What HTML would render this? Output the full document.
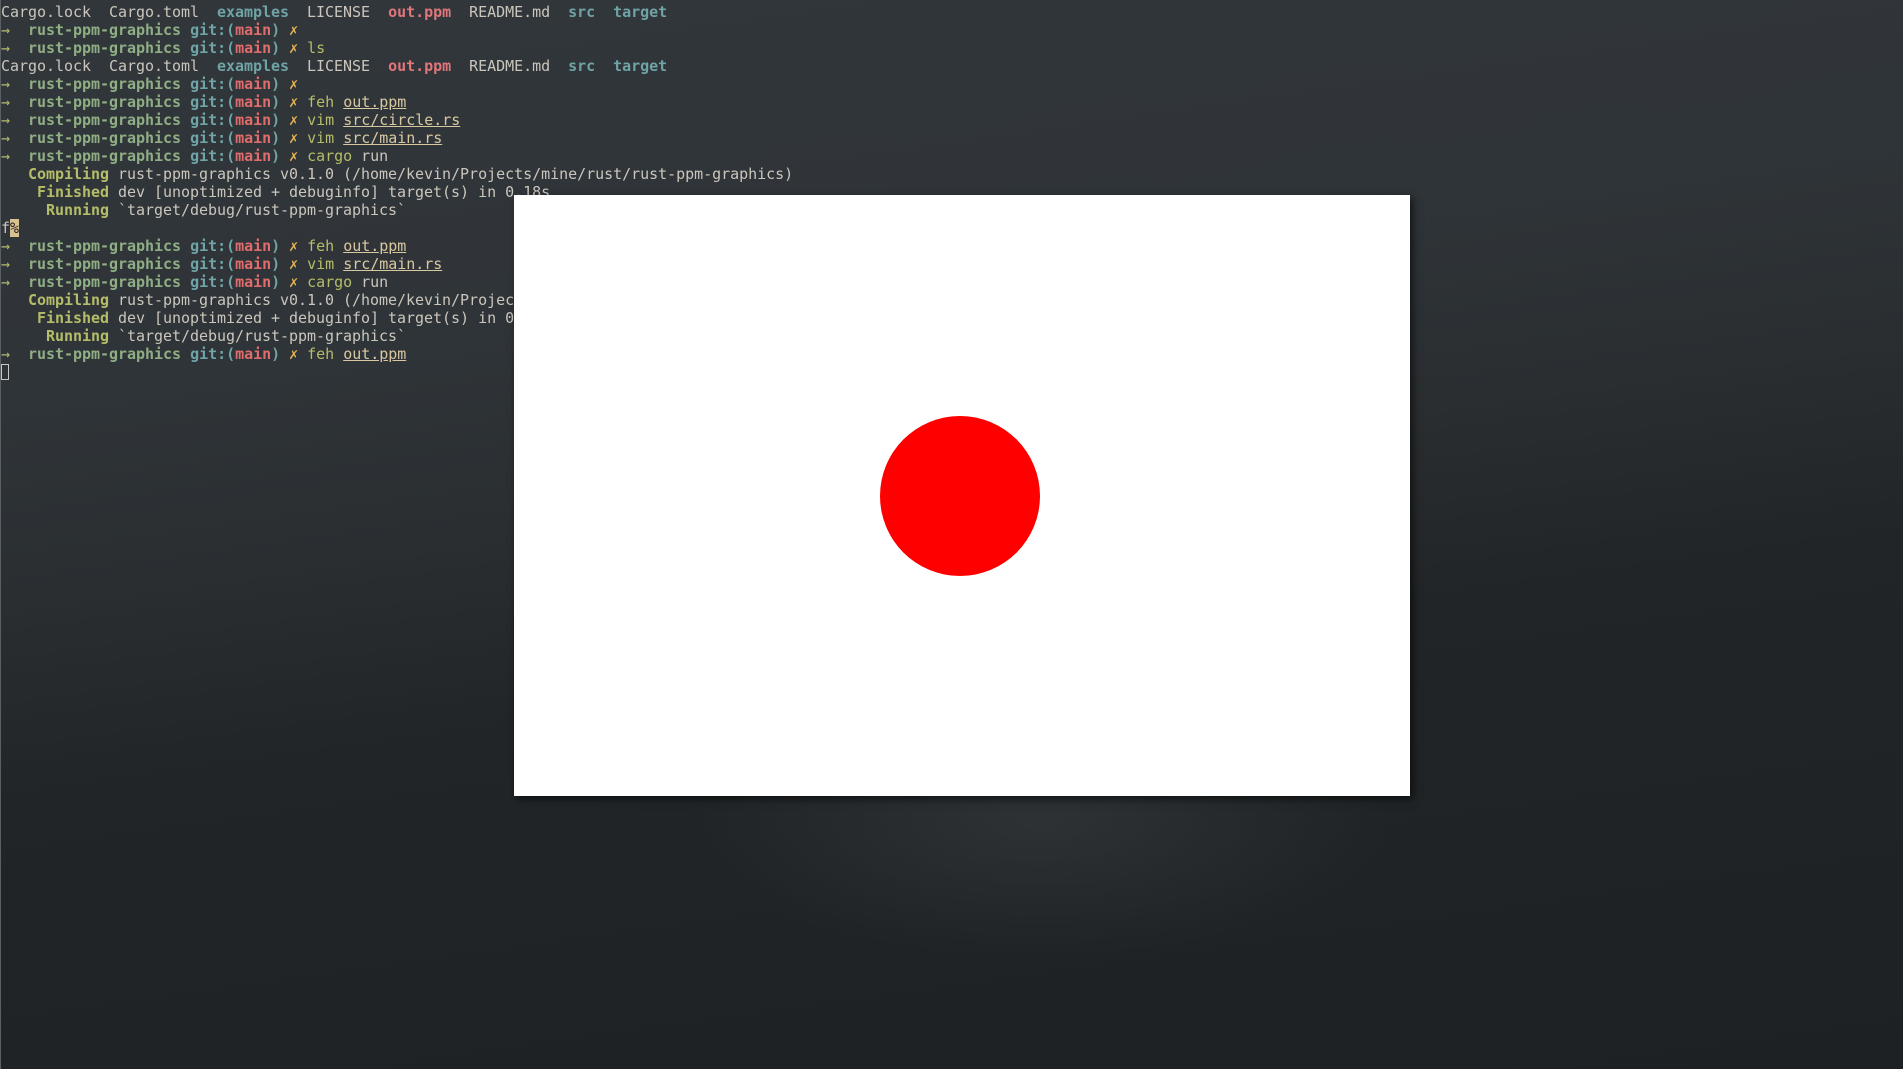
<!DOCTYPE html>
<html><head><meta charset="utf-8"><style>
html,body{margin:0;padding:0}
body{width:1903px;height:1069px;overflow:hidden;position:relative;
background:
radial-gradient(ellipse 500px 200px at 1040px 820px, rgba(70,75,80,0.35), transparent 70%),
linear-gradient(172deg, #31363b 0%, #2f3438 30%, #2a2e31 45%, #212527 60%, #1e2123 100%);
font-family:"DejaVu Sans Mono","Liberation Mono",monospace;font-size:15px;color:#cac6bc;letter-spacing:-0.03px}
.edge{position:absolute;left:0;top:0;width:1px;height:1069px;background:#5a5f63}
.term{position:absolute;left:1px;top:3px;line-height:18px;white-space:pre}
.g{color:#8fae84;font-weight:bold}
.tb{color:#6fa3a5;font-weight:bold}
.r{color:#e06c6c;font-weight:bold}
.y{color:#e5b450}
.c{color:#b5bd68}
.cb{color:#b5bd68;font-weight:bold}
.p{color:#e0767a;font-weight:bold}
.u{color:#d8c8a0;text-decoration:underline}
.a{color:#b5bd68}
.pc{background:#d8c090;color:#222}
.cur{display:inline-block;width:8px;height:16px;border:1px solid #c5c8c6;box-sizing:border-box;vertical-align:-3px}
.win{position:absolute;left:514px;top:195px;width:896px;height:601px;background:#fff;box-shadow:3px 3px 8px rgba(0,0,0,0.6)}
.dot{position:absolute;left:366px;top:221px;width:160px;height:160px;border-radius:50%;background:#ff0000}
</style></head><body>
<div class="edge"></div>
<div class="term">Cargo.lock  Cargo.toml  <span class="tb">examples</span>  LICENSE  <span class="p">out.ppm</span>  README.md  <span class="tb">src</span>  <span class="tb">target</span>
<span class="a">→</span>  <span class="g">rust-ppm-graphics</span> <span class="tb">git:(</span><span class="r">main</span><span class="tb">)</span> <span class="y">✗</span>
<span class="a">→</span>  <span class="g">rust-ppm-graphics</span> <span class="tb">git:(</span><span class="r">main</span><span class="tb">)</span> <span class="y">✗</span> <span class="c">ls</span>
Cargo.lock  Cargo.toml  <span class="tb">examples</span>  LICENSE  <span class="p">out.ppm</span>  README.md  <span class="tb">src</span>  <span class="tb">target</span>
<span class="a">→</span>  <span class="g">rust-ppm-graphics</span> <span class="tb">git:(</span><span class="r">main</span><span class="tb">)</span> <span class="y">✗</span>
<span class="a">→</span>  <span class="g">rust-ppm-graphics</span> <span class="tb">git:(</span><span class="r">main</span><span class="tb">)</span> <span class="y">✗</span> <span class="c">feh</span> <span class="u">out.ppm</span>
<span class="a">→</span>  <span class="g">rust-ppm-graphics</span> <span class="tb">git:(</span><span class="r">main</span><span class="tb">)</span> <span class="y">✗</span> <span class="c">vim</span> <span class="u">src/circle.rs</span>
<span class="a">→</span>  <span class="g">rust-ppm-graphics</span> <span class="tb">git:(</span><span class="r">main</span><span class="tb">)</span> <span class="y">✗</span> <span class="c">vim</span> <span class="u">src/main.rs</span>
<span class="a">→</span>  <span class="g">rust-ppm-graphics</span> <span class="tb">git:(</span><span class="r">main</span><span class="tb">)</span> <span class="y">✗</span> <span class="c">cargo</span> run
   <span class="cb">Compiling</span> rust-ppm-graphics v0.1.0 (/home/kevin/Projects/mine/rust/rust-ppm-graphics)
    <span class="cb">Finished</span> dev [unoptimized + debuginfo] target(s) in 0.18s
     <span class="cb">Running</span> `target/debug/rust-ppm-graphics`
f<span class="pc">%</span>
<span class="a">→</span>  <span class="g">rust-ppm-graphics</span> <span class="tb">git:(</span><span class="r">main</span><span class="tb">)</span> <span class="y">✗</span> <span class="c">feh</span> <span class="u">out.ppm</span>
<span class="a">→</span>  <span class="g">rust-ppm-graphics</span> <span class="tb">git:(</span><span class="r">main</span><span class="tb">)</span> <span class="y">✗</span> <span class="c">vim</span> <span class="u">src/main.rs</span>
<span class="a">→</span>  <span class="g">rust-ppm-graphics</span> <span class="tb">git:(</span><span class="r">main</span><span class="tb">)</span> <span class="y">✗</span> <span class="c">cargo</span> run
   <span class="cb">Compiling</span> rust-ppm-graphics v0.1.0 (/home/kevin/Projects/mine/rust/rust-ppm-graphics)
    <span class="cb">Finished</span> dev [unoptimized + debuginfo] target(s) in 0.19s
     <span class="cb">Running</span> `target/debug/rust-ppm-graphics`
<span class="a">→</span>  <span class="g">rust-ppm-graphics</span> <span class="tb">git:(</span><span class="r">main</span><span class="tb">)</span> <span class="y">✗</span> <span class="c">feh</span> <span class="u">out.ppm</span>
<span class="cur"></span></div>
<div class="win"><div class="dot"></div></div>
</body></html>
